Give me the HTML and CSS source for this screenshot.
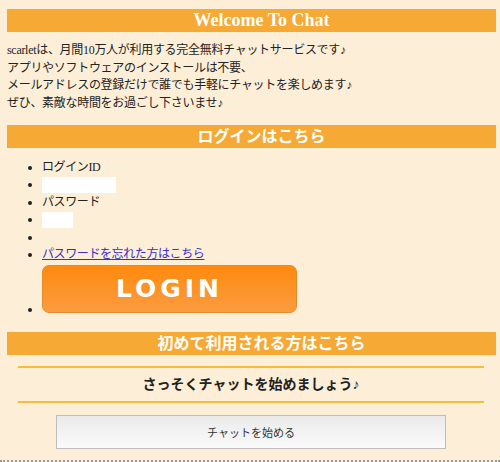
FILE: index.html
```html
<!DOCTYPE html>
<html lang="ja">
  <head>
    <meta charset="UTF-8" />
    <meta name="viewport" content="width=device-width, initial-scale=1.0" />
    <title>scarlet チャット</title>
    <link rel="stylesheet" href="styles.css">
  </head>
  <body>
    <div class="wrapper">
      <!-- Welcome -->
      <h2 class="bar bar-en">Welcome To Chat</h2>
      <p class="intro">
        scarletは、月間10万人が利用する完全無料チャットサービスです♪<br />
        アプリやソフトウェアのインストールは不要、<br />
        メールアドレスの登録だけで誰でも手軽にチャットを楽しめます♪<br />
        ぜひ、素敵な時間をお過ごし下さいませ♪
      </p>

      <!-- Login -->
      <h2 class="bar">ログインはこちら</h2>
      <form class="login-form" action="#">
        <ul class="login-list">
          <li>ログインID</li>
          <li><input type="text" class="input-id" /></li>
          <li>パスワード</li>
          <li><input type="password" class="input-pass" /></li>
          <li></li>
          <li><a href="#" class="forgot">パスワードを忘れた方はこちら</a></li>
          <li><a href="#" class="login-btn">LOGIN</a></li>
        </ul>
      </form>

      <!-- First time -->
      <h2 class="bar">初めて利用される方はこちら</h2>
      <div class="start">
        <h3 class="start-title">さっそくチャットを始めましょう♪</h3>
        <button type="button" class="start-btn">チャットを始める</button>
      </div>
    </div>
  </body>
</html>
```

FILE: styles.css
```css
/* General */
* {
  box-sizing: border-box;
}

body {
  margin: 0;
  background: #fdeed8;
  color: #222;
  font-family: "Liberation Serif", "Noto Sans CJK JP", serif;
}

.wrapper {
  padding: 9px 4px 11px 7px;
  border-bottom: 2px dotted #9a9a9a;
}

/* Section bars */
.bar {
  margin: 0;
  height: 23px;
  padding-left: 20px;
  background: #f6a935;
  color: #fff;
  font-size: 16px;
  line-height: 23px;
  font-weight: bold;
  text-align: center;
}

.bar-en {
  font-size: 18px;
}

/* Intro text */
.intro {
  margin: 10px 0 12px;
  font-size: 12px;
  line-height: 17.7px;
  letter-spacing: -0.3px;
}

/* Login */
.login-form {
  margin: 0;
}

.login-list {
  margin: 11px 0 14px;
  padding-left: 35px;
  font-size: 12px;
  line-height: 17px;
  letter-spacing: -0.4px;
}

.login-list li {
  min-height: 17px;
}

.login-list input {
  border: none;
  background: #fff;
  height: 16px;
  margin: 1px 0;
  padding: 0;
  vertical-align: middle;
}

.input-id {
  width: 74px;
}

.input-pass {
  width: 31px;
}

.forgot {
  color: #3a2fc9;
}

.login-btn {
  display: inline-block;
  overflow: hidden;
  width: 255px;
  height: 48px;
  margin-top: 2px;
  border: 1px solid #e48a2c;
  border-radius: 7px;
  background: linear-gradient(#ff8a0e, #fb9c40);
  color: #fff;
  font-family: "DejaVu Sans", sans-serif;
  font-size: 25px;
  font-weight: bold;
  letter-spacing: 4px;
  line-height: 46px;
  text-align: center;
  text-decoration: none;
}

/* Start chat */
.start {
  padding: 11px 12px 0 11px;
}

.start-title {
  margin: 0;
  padding: 7px 0 6px;
  border-top: 2px solid #f7bd3a;
  border-bottom: 2px solid #f7bd3a;
  font-size: 14px;
  line-height: 20px;
  text-align: center;
}

.start-btn {
  display: block;
  width: 390px;
  height: 34px;
  margin: 12px auto 0;
  border: 1px solid #bdbdbd;
  background: linear-gradient(#eaeaea, #fafafa);
  color: #333;
  font-family: "Noto Sans CJK JP", sans-serif;
  font-size: 11px;
}
```
